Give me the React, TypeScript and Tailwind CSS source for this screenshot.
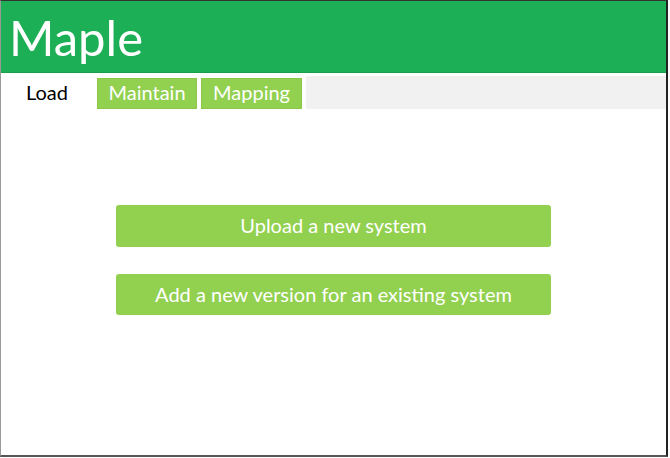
import React from "react";

export default function App() {
  const font = { fontFamily: "Lato, 'Open Sans', sans-serif" };
  return (
    <div className="w-[670px] h-[458px] bg-white" style={font}>
      <div className="w-[668px] h-[457px] border-t border-r-2 border-b-2 border-l border-t-[#333] border-r-[#222] border-b-[#555] border-l-[#999] flex flex-col">
        <div className="h-[72px] bg-[#1caf55] border-b border-[#17a04a] flex items-center pl-[8px]">
          <span className="text-white text-[49px] leading-none mt-[2px]">Maple</span>
        </div>
        <div className="flex mt-[1px] h-[35px]">
          <div className="w-[95px] bg-white flex items-center justify-center pr-[3px]">
            <span className="text-black text-[20px]">Load</span>
          </div>
          <div className="flex items-end gap-[4px] ml-[1px]">
            <div className="w-[100px] h-[31px] bg-[#92d050] border border-[#8bc84a] flex items-center justify-center pb-[3px]">
              <span className="text-white text-[20px]">Maintain</span>
            </div>
            <div className="w-[101px] h-[31px] bg-[#92d050] border border-[#8bc84a] flex items-center justify-center pb-[3px]">
              <span className="text-white text-[20px]">Mapping</span>
            </div>
          </div>
          <div className="flex-1 ml-[4px] mt-[2px] h-[33px] bg-[#f1f1f1]" />
        </div>
        <div className="flex flex-col items-center mt-[96px] gap-[27px]">
          <button className="w-[435px] h-[42px] rounded-[3px] bg-[#92d050] text-white text-[20px] flex items-center justify-center pb-[2px]">
            Upload a new system
          </button>
          <button className="w-[435px] h-[41px] rounded-[3px] bg-[#92d050] text-white text-[20px] flex items-center justify-center pb-[2px]">
            Add a new version for an existing system
          </button>
        </div>
      </div>
    </div>
  );
}
